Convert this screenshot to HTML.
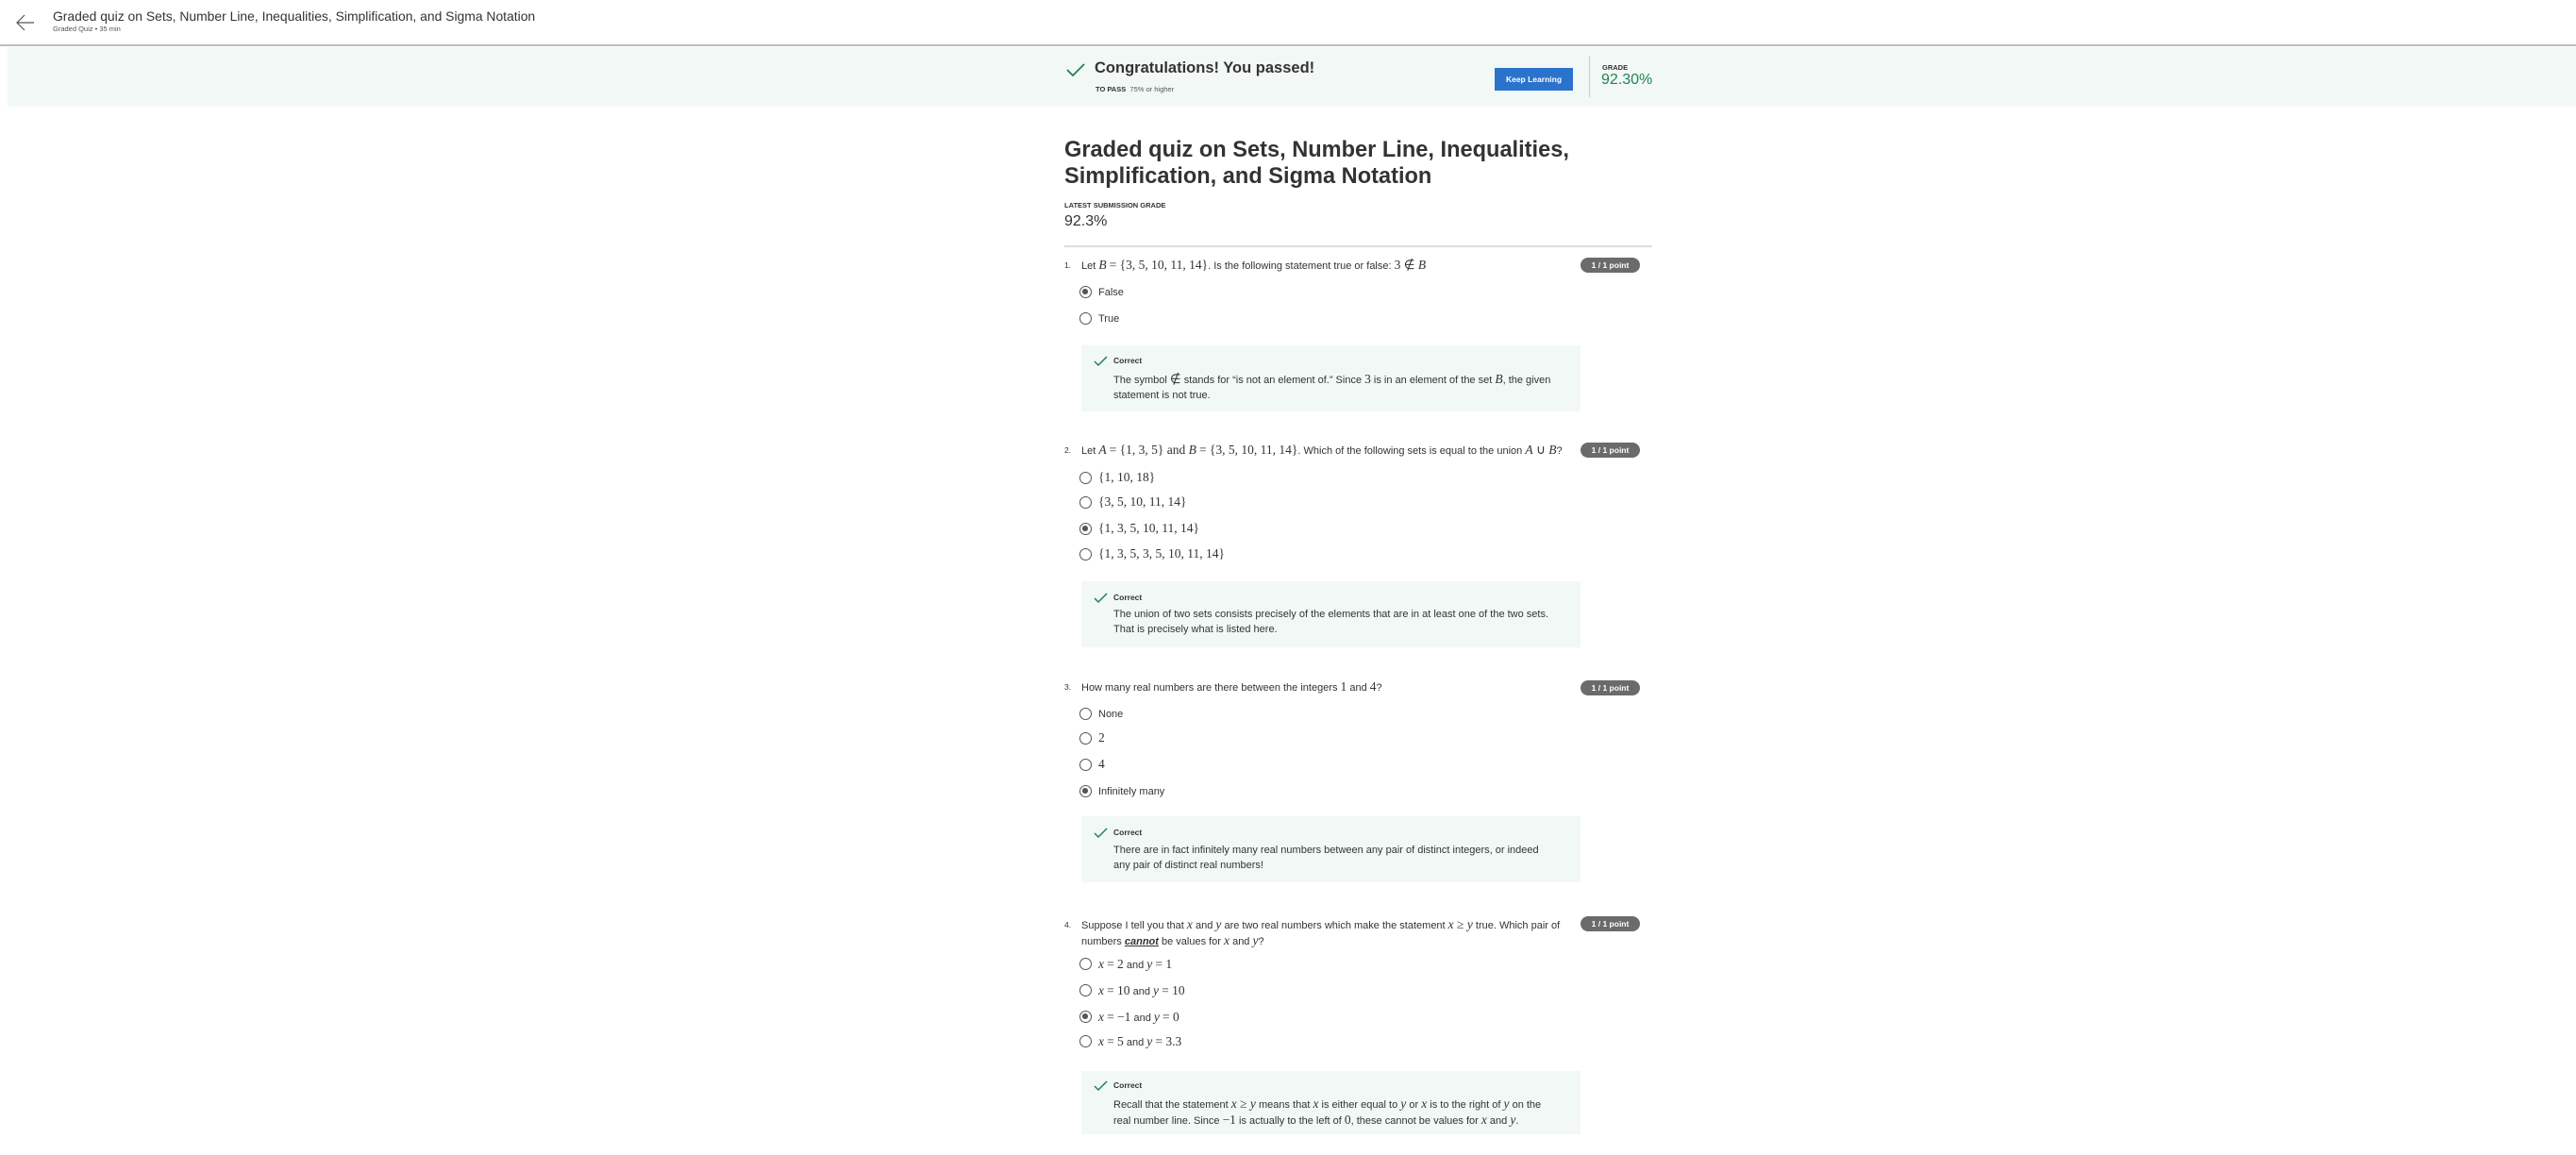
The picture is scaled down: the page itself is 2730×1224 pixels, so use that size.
<!DOCTYPE html>
<html><head><meta charset="utf-8"><style>
*{margin:0;padding:0;box-sizing:border-box}
body{width:2730px;height:1224px;background:#fff;font-family:"Liberation Sans",sans-serif;color:#1f1f1f;position:relative;overflow:hidden}
.a{position:absolute;white-space:nowrap}
.m{font-family:"Liberation Serif",serif;font-size:13.5px}
.i{font-style:italic}
.t{font-size:11px;line-height:16px;color:#333}
.t.m{font-size:13.5px;font-family:"Liberation Serif",serif}
.r{position:absolute;width:13px;height:13px;border:1.4px solid #555;border-radius:50%}
.r.s::after{content:"";position:absolute;left:2.3px;top:2.3px;width:5.6px;height:5.6px;border-radius:50%;background:#555}
.pill{position:absolute;left:1675px;width:63px;height:16px;border-radius:8px;background:#6b6b6b;color:#fff;font-size:8.5px;font-weight:bold;text-align:center;line-height:16px}
.fb{position:absolute;left:1146px;width:529px;background:#f2f8f6}
.ck{position:absolute}
.lab{font-size:8.5px;font-weight:bold;color:#333}
</style></head><body>
<svg class="a" style="left:17px;top:15px" width="20" height="18" viewBox="0 0 20 18"><path d="M19 9H2M9 1L1 9l8 8" fill="none" stroke="#555" stroke-width="1.2"/></svg>
<div class="a" style="left:56px;top:9px;font-size:13.9px;color:#333">Graded quiz on Sets, Number Line, Inequalities, Simplification, and Sigma Notation</div>
<div class="a" style="left:56px;top:26px;font-size:7.5px;color:#555">Graded Quiz • 35 min</div>
<div class="a" style="left:0;top:47px;width:2730px;height:2px;background:#bdbdbd"></div>
<div class="a" style="left:8px;top:50px;width:2722px;height:63px;background:#f2f8f6"></div>
<svg class="a" style="left:1130px;top:67px" width="20" height="15" viewBox="0 0 20 15"><path d="M1 7l6 6L19 1" fill="none" stroke="#1f8354" stroke-width="1.8"/></svg>
<div class="a" style="left:1160px;top:63px;font-size:16.5px;font-weight:bold;color:#333">Congratulations! You passed!</div>
<div class="a" style="left:1161px;top:90px;font-size:7.5px;color:#555"><b style="color:#333">TO PASS</b>&nbsp; 75% or higher</div>
<div class="a" style="left:1584px;top:72px;width:83px;height:24px;background:#2a73cc;color:#fff;font-size:8.5px;font-weight:bold;text-align:center;line-height:24px">Keep Learning</div>
<div class="a" style="left:1684px;top:59px;width:1px;height:44px;background:#ccc"></div>
<div class="a" style="left:1698px;top:67px;font-size:7.5px;font-weight:bold;color:#333">GRADE</div>
<div class="a" style="left:1697px;top:76px;font-size:16px;color:#1f8354">92.30%</div>
<div class="a" style="left:1128px;top:145px;font-size:23.6px;font-weight:bold;line-height:28px;color:#333">Graded quiz on Sets, Number Line, Inequalities,<br>Simplification, and Sigma Notation</div>
<div class="a" style="left:1128px;top:213px;font-size:7.5px;font-weight:bold;color:#333">LATEST SUBMISSION GRADE</div>
<div class="a" style="left:1128px;top:226px;font-size:16px;color:#333">92.3%</div>
<div class="a" style="left:1128px;top:260px;width:623px;height:2px;background:#ddd"></div>

<div class="a t" style="left:1128px;top:273px;font-size:8.5px">1.</div>
<div class="a t" style="left:1146px;top:273px">Let <span class="m i">B</span> <span class="m">= {3, 5, 10, 11, 14}</span>. Is the following statement true or false: <span class="m">3 ∉ </span><span class="m i">B</span></div>
<div class="pill" style="top:273px">1 / 1 point</div>
<div class="r s" style="left:1144px;top:303px"></div><div class="a t" style="left:1164px;top:302px">False</div>
<div class="r" style="left:1144px;top:331px"></div><div class="a t" style="left:1164px;top:330px">True</div>
<div class="fb" style="top:366px;height:70px"></div>
<svg class="ck" style="left:1159px;top:377px" width="15" height="12" viewBox="0 0 15 12"><path d="M1 6l4 4 9-9" fill="none" stroke="#1f8354" stroke-width="1.5"/></svg>
<div class="a lab" style="left:1180px;top:377px">Correct</div>
<div class="a t" style="left:1180px;top:394px">The symbol <span class="m">∉</span> stands for “is not an element of.” Since <span class="m">3</span> is in an element of the set <span class="m i">B</span>, the given<br>statement is not true.</div>

<div class="a t" style="left:1128px;top:469px;font-size:8.5px">2.</div>
<div class="a t" style="left:1146px;top:469px">Let <span class="m i">A</span> <span class="m">= {1, 3, 5} and </span><span class="m i">B</span> <span class="m">= {3, 5, 10, 11, 14}</span>. Which of the following sets is equal to the union <span class="m i">A</span><span class="m"> ∪ </span><span class="m i">B</span>?</div>
<div class="pill" style="top:469px">1 / 1 point</div>
<div class="r" style="left:1144px;top:500px"></div><div class="a t m" style="left:1164px;top:498px">{1, 10, 18}</div>
<div class="r" style="left:1144px;top:526px"></div><div class="a t m" style="left:1164px;top:524px">{3, 5, 10, 11, 14}</div>
<div class="r s" style="left:1144px;top:554px"></div><div class="a t m" style="left:1164px;top:552px">{1, 3, 5, 10, 11, 14}</div>
<div class="r" style="left:1144px;top:581px"></div><div class="a t m" style="left:1164px;top:579px">{1, 3, 5, 3, 5, 10, 11, 14}</div>
<div class="fb" style="top:616px;height:70px"></div>
<svg class="ck" style="left:1159px;top:628px" width="15" height="12" viewBox="0 0 15 12"><path d="M1 6l4 4 9-9" fill="none" stroke="#1f8354" stroke-width="1.5"/></svg>
<div class="a lab" style="left:1180px;top:628px">Correct</div>
<div class="a t" style="left:1180px;top:643px">The union of two sets consists precisely of the elements that are in at least one of the two sets.<br>That is precisely what is listed here.</div>

<div class="a t" style="left:1128px;top:720px;font-size:8.5px">3.</div>
<div class="a t" style="left:1146px;top:720px">How many real numbers are there between the integers <span class="m">1</span> and <span class="m">4</span>?</div>
<div class="pill" style="top:721px">1 / 1 point</div>
<div class="r" style="left:1144px;top:750px"></div><div class="a t" style="left:1164px;top:749px">None</div>
<div class="r" style="left:1144px;top:776px"></div><div class="a t m" style="left:1164px;top:774px">2</div>
<div class="r" style="left:1144px;top:804px"></div><div class="a t m" style="left:1164px;top:802px">4</div>
<div class="r s" style="left:1144px;top:832px"></div><div class="a t" style="left:1164px;top:831px">Infinitely many</div>
<div class="fb" style="top:865px;height:70px"></div>
<svg class="ck" style="left:1159px;top:877px" width="15" height="12" viewBox="0 0 15 12"><path d="M1 6l4 4 9-9" fill="none" stroke="#1f8354" stroke-width="1.5"/></svg>
<div class="a lab" style="left:1180px;top:877px">Correct</div>
<div class="a t" style="left:1180px;top:893px">There are in fact infinitely many real numbers between any pair of distinct integers, or indeed<br>any pair of distinct real numbers!</div>

<div class="a t" style="left:1128px;top:972px;font-size:8.5px">4.</div>
<div class="a t" style="left:1146px;top:972px">Suppose I tell you that <span class="m i">x</span> and <span class="m i">y</span> are two real numbers which make the statement <span class="m i">x</span><span class="m"> ≥ </span><span class="m i">y</span> true. Which pair of<br>numbers <b><i style="text-decoration:underline">cannot</i></b> be values for <span class="m i">x</span> and <span class="m i">y</span>?</div>
<div class="pill" style="top:971px">1 / 1 point</div>
<div class="r" style="left:1144px;top:1015px"></div><div class="a t" style="left:1164px;top:1014px"><span class="m i">x</span> <span class="m">= 2</span> and <span class="m i">y</span> <span class="m">= 1</span></div>
<div class="r" style="left:1144px;top:1043px"></div><div class="a t" style="left:1164px;top:1042px"><span class="m i">x</span> <span class="m">= 10</span> and <span class="m i">y</span> <span class="m">= 10</span></div>
<div class="r s" style="left:1144px;top:1071px"></div><div class="a t" style="left:1164px;top:1070px"><span class="m i">x</span> <span class="m">= −1</span> and <span class="m i">y</span> <span class="m">= 0</span></div>
<div class="r" style="left:1144px;top:1097px"></div><div class="a t" style="left:1164px;top:1096px"><span class="m i">x</span> <span class="m">= 5</span> and <span class="m i">y</span> <span class="m">= 3.3</span></div>
<div class="fb" style="top:1135px;height:67px"></div>
<svg class="ck" style="left:1159px;top:1145px" width="15" height="12" viewBox="0 0 15 12"><path d="M1 6l4 4 9-9" fill="none" stroke="#1f8354" stroke-width="1.5"/></svg>
<div class="a lab" style="left:1180px;top:1145px">Correct</div>
<div class="a t" style="left:1180px;top:1162px">Recall that the statement <span class="m i">x</span><span class="m"> ≥ </span><span class="m i">y</span> means that <span class="m i">x</span> is either equal to <span class="m i">y</span> or <span class="m i">x</span> is to the right of <span class="m i">y</span> on the<br>real number line. Since <span class="m">−1</span> is actually to the left of <span class="m">0</span>, these cannot be values for <span class="m i">x</span> and <span class="m i">y</span>.</div>
</body></html>
